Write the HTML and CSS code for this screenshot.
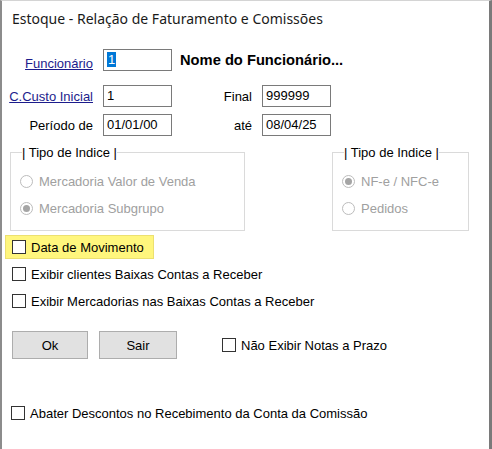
FILE: index.html
```html
<!DOCTYPE html>
<html>
    <head>
        <title>Estoque - Relação de Faturamento e Comissões</title>
        <link rel="stylesheet" href="styles.css">
    </head>
    <body>
        <div class="window">
            <div class="title">Estoque - Relação de Faturamento e Comissões</div>

            <div class="fields">
                <a class="label link" href="#">Funcionário</a>
                <div class="input first"><span class="selected">1</span></div>
                <div class="name">Nome do Funcionário...</div>

                <a class="label link" href="#">C.Custo Inicial</a>
                <div class="input">1</div>
                <div class="label">Final</div>
                <div class="input">999999</div>

                <div class="label">Período de</div>
                <div class="input">01/01/00</div>
                <div class="label">até</div>
                <div class="input">08/04/25</div>
            </div>

            <div class="groups">
                <fieldset class="group group_left">
                    <legend>| Tipo de Indice |</legend>
                    <div class="radio"><span class="dot"></span>Mercadoria Valor de Venda</div>
                    <div class="radio"><span class="dot checked"></span>Mercadoria Subgrupo</div>
                </fieldset>
                <fieldset class="group group_right">
                    <legend>| Tipo de Indice |</legend>
                    <div class="radio"><span class="dot checked"></span>NF-e / NFC-e</div>
                    <div class="radio"><span class="dot"></span>Pedidos</div>
                </fieldset>
            </div>

            <div class="checks">
                <div class="check highlight"><span class="box"></span>Data de Movimento</div>
                <div class="check"><span class="box"></span>Exibir clientes Baixas Contas a Receber</div>
                <div class="check"><span class="box"></span>Exibir Mercadorias nas Baixas Contas a Receber</div>
            </div>

            <div class="actions">
                <div class="button ok">Ok</div>
                <div class="button sair">Sair</div>
                <div class="check prazo"><span class="box"></span>Não Exibir Notas a Prazo</div>
            </div>

            <div class="check abater"><span class="box"></span>Abater Descontos no Recebimento da Conta da Comissão</div>
        </div>
    </body>
</html>
```

FILE: styles.css
```css
body {
    margin: 0px;
    background: white;
    font-family: "Liberation Sans", Arial, sans-serif;
    font-size: 13px;
    color: black;
}
.window {
    width: 492px;
    height: 449px;
    box-sizing: border-box;
    border-top: 1px solid #d4d4d4;
    border-left: 2px solid #8c8c8c;
    border-right: 3px solid #7a7a7a;
    background: white;
}
.title {
    font-family: "Noto Sans", sans-serif;
    font-size: 14px;
    padding: 8px 0 0 10px;
    height: 27px;
    color: #1a1a1a;
}

/* top fields */
.fields {
    display: grid;
    grid-template-columns: 85px 69px 70px 69px;
    column-gap: 10px;
    row-gap: 7px;
    align-items: center;
    padding-left: 6px;
    margin-top: 13px;
}
.label {
    text-align: right;
}
.link {
    color: #1c1c8c;
    text-decoration: underline;
}
.input {
    height: 22px;
    box-sizing: border-box;
    border: 1px solid #7a7a7a;
    padding: 2px 0 0 3px;
    line-height: 16px;
}
.input.first {
    margin-bottom: 7px;
}
.selected {
    background: #0078d7;
    color: white;
    padding: 0 1px;
}
.name {
    grid-column: 3 / span 2;
    font-weight: bold;
    font-size: 14.7px;
    margin-left: -2px;
    margin-bottom: 7px;
    white-space: nowrap;
}

/* radio groups */
.groups {
    display: flex;
    justify-content: space-between;
    padding: 0 20px 0 8px;
    margin-top: 9px;
}
.group {
    border: 1px solid #dadada;
    margin: 0px;
    padding: 8px 0 8px 9px;
    color: #a0a0a0;
}
.group legend {
    color: black;
    padding: 0px;
    margin-left: 2px;
}
.group_left {
    width: 235px;
    box-sizing: border-box;
}
.group_right {
    width: 137px;
    box-sizing: border-box;
}
.radio {
    display: flex;
    align-items: center;
    height: 27px;
}
.dot {
    width: 13px;
    height: 13px;
    box-sizing: border-box;
    border: 1px solid #bcbcbc;
    border-radius: 50%;
    margin-right: 6px;
    display: inline-flex;
    align-items: center;
    justify-content: center;
}
.dot.checked::after {
    content: "";
    width: 7px;
    height: 7px;
    border-radius: 50%;
    background: #a5a5a5;
}

/* checkboxes */
.checks {
    padding-left: 3px;
    margin-top: 4px;
}
.check {
    display: flex;
    align-items: center;
    height: 22px;
}
.box {
    width: 14px;
    height: 14px;
    box-sizing: border-box;
    border: 1px solid #333;
    background: white;
    margin-right: 5px;
}
.checks .check {
    padding-left: 6px;
    width: fit-content;
    padding-right: 4px;
    border: 1px solid transparent;
    margin-bottom: 3px;
}
.checks .highlight {
    background: #fff67d;
    border-color: #ece070;
    padding-right: 9px;
}

.actions {
    display: flex;
    align-items: center;
    padding-left: 10px;
    margin-top: 18px;
}
.button {
    height: 28px;
    box-sizing: border-box;
    border: 1px solid #adadad;
    background: #e1e1e1;
    display: flex;
    align-items: center;
    justify-content: center;
}
.ok {
    width: 76px;
}
.sair {
    width: 78px;
    margin-left: 11px;
}
.prazo {
    margin-left: 45px;
}
.abater {
    margin: 43px 0 0 9px;
}
```
